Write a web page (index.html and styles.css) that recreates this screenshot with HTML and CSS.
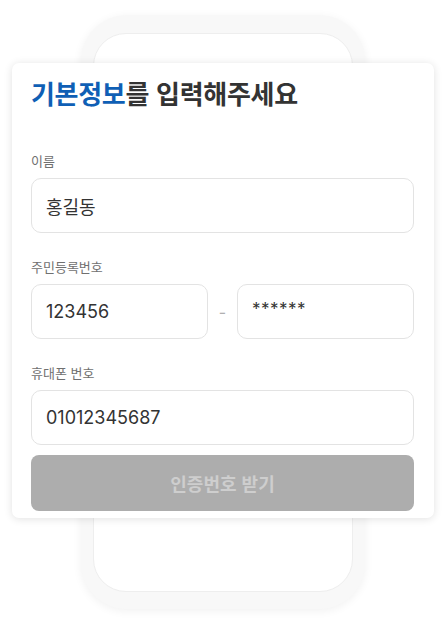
FILE: index.html
```html
<!DOCTYPE html>
<html lang="ko">

<head>
    <meta charset="UTF-8">
    <meta name="viewport" content="width=device-width, initial-scale=1.0">
    <title>기본정보 입력</title>
    <link rel="stylesheet" href="styles.css">
</head>

<body>
    <div class="stage">
        <div class="phone">
            <div class="phone-screen"></div>
        </div>

        <div class="card">
            <h1><span class="accent">기본정보</span>를 입력해주세요</h1>

            <div class="field">
                <label>이름</label>
                <div class="input">홍길동</div>
            </div>

            <div class="field">
                <label>주민등록번호</label>
                <div class="id-row">
                    <div class="input">123456</div>
                    <span class="dash">-</span>
                    <div class="input masked">******</div>
                </div>
            </div>

            <div class="field">
                <label>휴대폰 번호</label>
                <div class="input">01012345687</div>
            </div>

            <button disabled>인증번호 받기</button>
        </div>
    </div>
</body>

</html>
```

FILE: styles.css
```css
body {
    margin: 0;
    background-color: #ffffff;
    font-family: Inter, 'Noto Sans CJK KR', sans-serif;
    color: #333;
}

.stage {
    display: grid;
    width: 446px;
    height: 625px;
}

.phone,
.card {
    grid-area: 1 / 1;
}

.phone {
    justify-self: center;
    align-self: start;
    margin-top: 15px;
    width: 284px;
    height: 594px;
    box-sizing: border-box;
    padding: 18px 12px 17px;
    background-color: #f8f8f8;
    border-radius: 46px;
    box-shadow: 0 2px 10px rgba(0, 0, 0, 0.06);
}

.phone-screen {
    height: 100%;
    box-sizing: border-box;
    background-color: #ffffff;
    border: 1px solid #eeeeee;
    border-radius: 33px;
}

.card {
    align-self: start;
    margin: 63px 0 0 12px;
    width: 422px;
    height: 455px;
    box-sizing: border-box;
    padding: 12px 20px 0 19px;
    background: #ffffff;
    border-radius: 7px;
    box-shadow: 0 1px 8px rgba(0, 0, 0, 0.12);
}

h1 {
    margin: 0 0 41px;
    font-family: 'Noto Sans CJK KR', sans-serif;
    font-size: 26px;
    line-height: 36px;
    font-weight: 700;
    color: #333;
    letter-spacing: -0.3px;
}

.accent {
    color: #0f5fb5;
}

.field {
    margin-bottom: 25px;
}

.field label {
    display: block;
    margin-bottom: 8px;
    font-family: 'Noto Sans CJK KR', sans-serif;
    font-size: 13px;
    line-height: 18px;
    color: #707070;
}

.input {
    height: 55px;
    box-sizing: border-box;
    padding: 0 14px;
    display: flex;
    align-items: center;
    border: 1px solid #e3e3e3;
    border-radius: 10px;
    font-size: 18px;
    color: #333;
}

.id-row {
    display: grid;
    grid-template-columns: 1fr 29px 1fr;
    align-items: center;
}

.dash {
    text-align: center;
    color: #b0b0b0;
    font-size: 16px;
}

.masked {
    align-items: flex-start;
    padding-top: 14px;
    font-size: 17px;
    letter-spacing: 0.5px;
}

button {
    display: block;
    width: 100%;
    height: 56px;
    margin-top: -15px;
    border: none;
    border-radius: 8px;
    background-color: #adadad;
    color: #cecece;
    font-family: 'Noto Sans CJK KR', sans-serif;
    font-size: 18px;
    font-weight: 700;
}
```
